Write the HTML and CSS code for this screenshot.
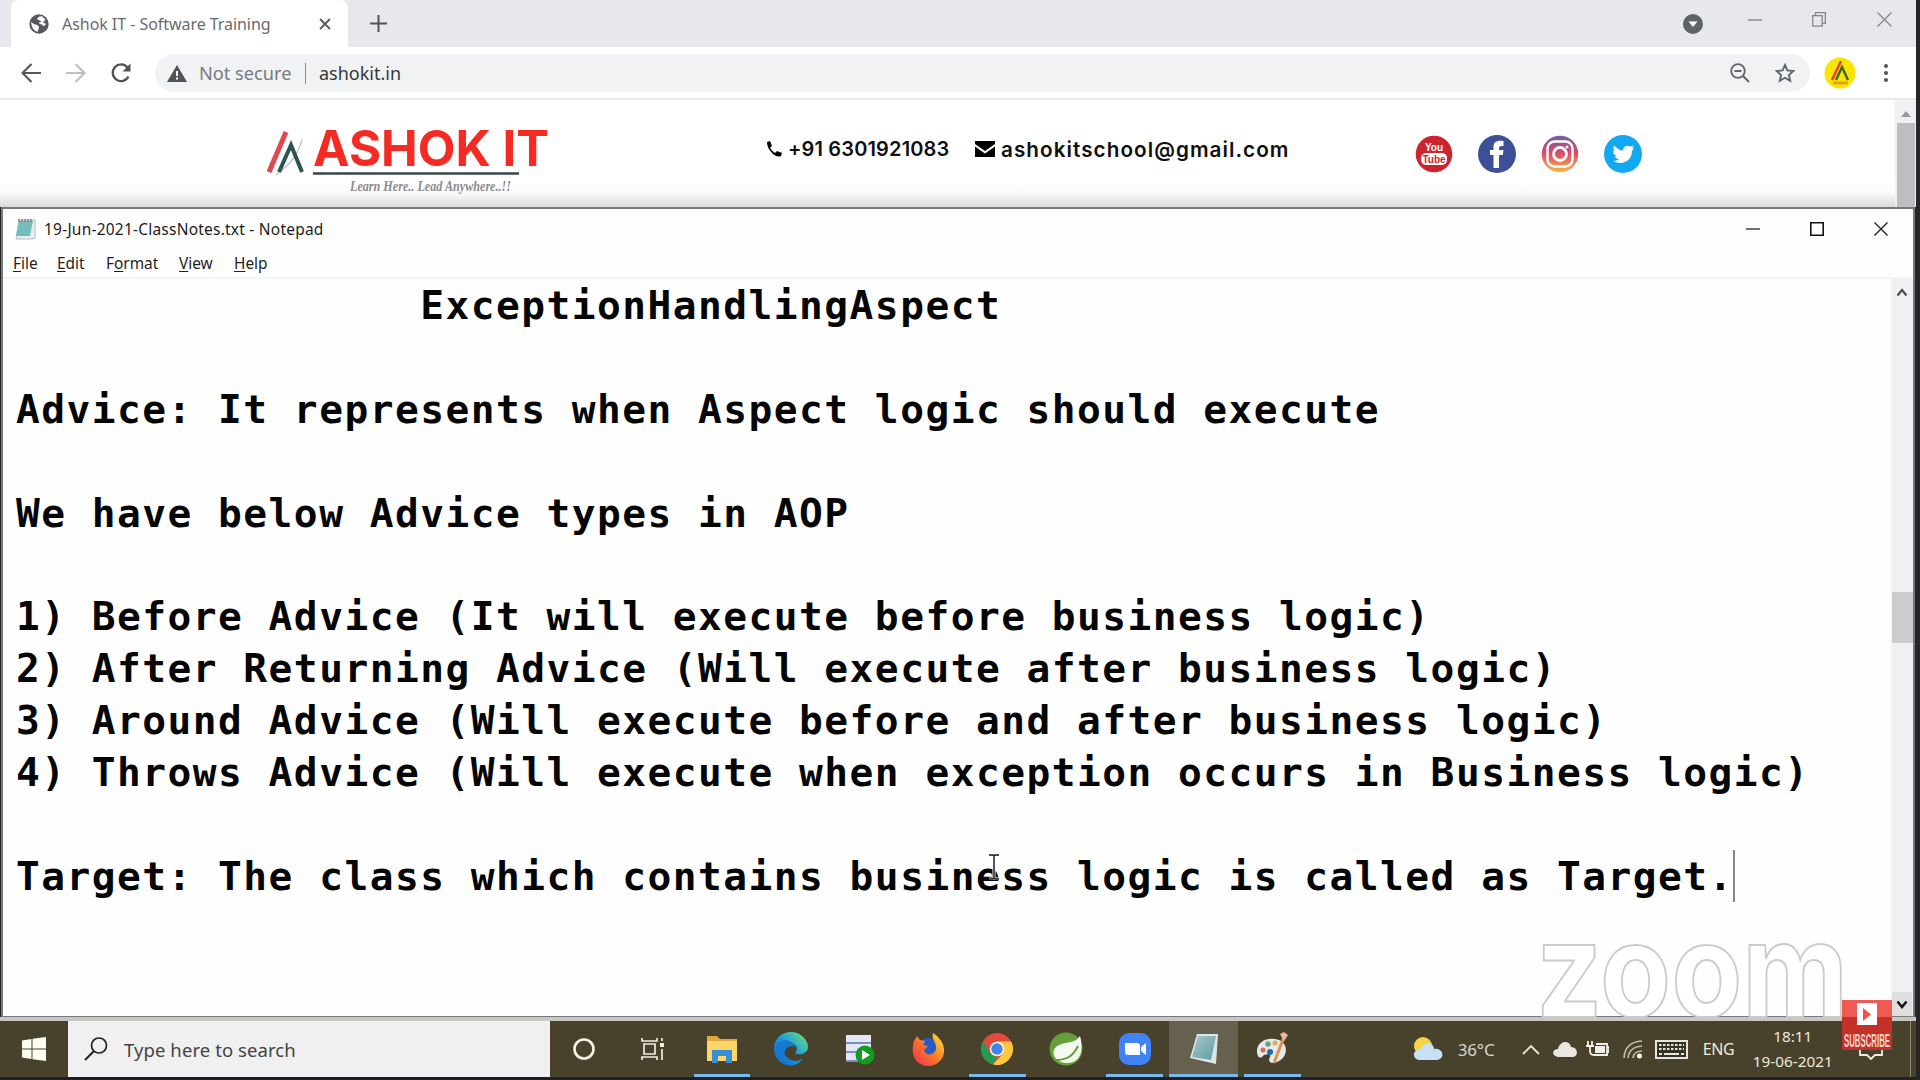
FILE: index.html
```html
<!DOCTYPE html>
<html lang="en">
<head>
<meta charset="utf-8">
<title>19-Jun-2021-ClassNotes.txt - Notepad</title>
<link rel="stylesheet" href="styles.css">
</head>
<body>
<main class="desktop">
  <section class="browser">
    <div class="tabstrip">
      <div class="tab">
        <svg class="globe" width="20" height="20" viewBox="0 0 20 20"><circle cx="10" cy="10" r="9.700" fill="#55585c"/><path d="M2.500 8.500Q5 11 7.500 11q2.500.5 2 3l-1 3.500Q3 16 2.500 8.500zM8 5q2-3 5-2.500l3 3q-1 3-4 2.500-2 0-1.500 1.500 3 0 4 2.500l2.500-2" fill="#fff" stroke="#fff" stroke-width=".6"/></svg>
        <span class="tab-title">Ashok IT - Software Training</span>
        <svg class="tab-x" width="12" height="12" viewBox="0 0 12 12"><path d="M1 1l10 10M11 1L1 11" stroke="#55585c" stroke-width="1.8"/></svg>
      </div>
      <svg class="plus" width="17" height="17" viewBox="0 0 17 17"><path d="M8.500 0v17M0 8.500h17" stroke="#505357" stroke-width="2"/></svg>
      <div class="win-controls">
        <svg width="20" height="20" viewBox="0 0 20 20"><circle cx="10" cy="10" r="10" fill="#5f6368"/><path d="M5.500 7.500h9L10 13z" fill="#fff"/></svg>
        <svg width="14" height="14" viewBox="0 0 14 14"><path d="M0 7h14" stroke="#85868a" stroke-width="1.400"/></svg>
        <svg width="14" height="15" viewBox="0 0 14 15"><path d="M.7 3.700h9.500v10.500H.7zM3.500 3.500V.7h9.800v10.600h-3" fill="none" stroke="#85868a" stroke-width="1.300"/></svg>
        <svg width="15" height="15" viewBox="0 0 15 15"><path d="M.5.5l14 14M14.500.5l-14 14" stroke="#85868a" stroke-width="1.200"/></svg>
      </div>
    </div>
    <div class="toolbar">
      <svg class="nav" width="20" height="20" viewBox="0 0 20 20"><path d="M20 10H2M10.500 1L1.500 10l9 9" fill="none" stroke="#55585c" stroke-width="2.200"/></svg>
      <svg class="nav" width="20" height="20" viewBox="0 0 20 20"><path d="M0 10h18M9.500 1l9 9-9 9" fill="none" stroke="#c0c1c3" stroke-width="2.200"/></svg>
      <svg class="nav" width="20" height="20" viewBox="0 0 20 20"><path d="M17.500 13.500A8.300 8.300 0 1 1 16.500 4.500" fill="none" stroke="#505357" stroke-width="2.300"/><path d="M19.500.5v8h-8z" fill="#505357"/></svg>
      <div class="omnibox">
        <svg width="20" height="17" viewBox="0 0 20 17"><path d="M10 0l10 17H0z" fill="#505357"/><path d="M10 6v5M10 12.500v2" stroke="#fff" stroke-width="2"/></svg>
        <span class="insecure">Not secure</span>
        <span class="divider"></span>
        <span class="host">ashokit.in</span>
        <svg class="mag" width="20" height="20" viewBox="0 0 20 20"><circle cx="8" cy="8" r="6.800" fill="none" stroke="#606367" stroke-width="1.800"/><path d="M4.500 8h7M13 13l6 6" stroke="#606367" stroke-width="2"/></svg>
        <svg class="star" width="20" height="20" viewBox="0 0 20 20"><path d="M10 2l2.400 5.400 5.900.6-4.400 4 1.300 5.800L10 14.800l-5.200 3 1.300-5.800-4.400-4 5.900-.6z" fill="none" stroke="#606367" stroke-width="1.900"/></svg>
      </div>
      <svg class="avatar" width="32" height="32" viewBox="0 0 32 32"><circle cx="16" cy="16" r="15.500" fill="#f8e500"/><path d="M8 23L17 4" stroke="#e1452d" stroke-width="2.600"/><path d="M12 23l6-13 6 13" fill="none" stroke="#41632c" stroke-width="2.400"/><path d="M9 26h15" stroke="#ed9b22" stroke-width="3"/></svg>
      <svg class="dots" width="4" height="18" viewBox="0 0 4 18"><circle cx="2" cy="2" r="2"/><circle cx="2" cy="9" r="2"/><circle cx="2" cy="16" r="2"/></svg>
    </div>
    <div class="site">
      <svg class="logo" width="300" height="85" viewBox="0 -13 300 85">
        <path d="M2 45L19 5" stroke="#df4850" stroke-width="5"/>
        <path d="M9 48Q31 32 35 12" fill="none" stroke="#c5c9c8" stroke-width="1.500"/>
        <path d="M12 45l12-27 11 27" fill="none" stroke="#2c554f" stroke-width="4"/>
        <text class="logo-name" x="46" y="39" textLength="236" lengthAdjust="spacingAndGlyphs">ASHOK IT</text>
        <path d="M46 46.500h206" stroke="#35474a" stroke-width="2.400"/>
        <text class="logo-tag" x="83" y="64" textLength="161" lengthAdjust="spacingAndGlyphs">Learn Here.. Lead Anywhere..!!</text>
      </svg>
      <div class="contact">
        <svg width="16" height="16" viewBox="0 0 16 16"><path d="M1 1l3-1 2 5-2 2q2 3 5 5l2-2 5 2-1 3q-4 2-9-3T1 1z"/></svg>
        <span class="phone">+91 6301921083</span>
        <svg width="20" height="16" viewBox="0 0 20 16"><path d="M0 0h20v3l-10 7L0 3zM0 5.500l10 7 10-7V16H0z"/></svg>
        <span class="mail">ashokitschool@gmail.com</span>
      </div>
      <div class="social">
        <svg width="38" height="38" viewBox="0 0 38 38"><circle cx="19" cy="19" r="18.300" fill="#cc2530"/><rect x="6" y="18" width="26" height="12" rx="5" fill="#fff"/><text x="19" y="16" class="yt yt-you">You</text><text x="19" y="28" class="yt yt-tube">Tube</text></svg>
        <svg width="38" height="38" viewBox="0 0 38 38"><circle cx="19" cy="19" r="19" fill="#3b5096"/><path d="M15.500 33V20H12v-5h3.500v-3c0-5 3-7 10-6v5c-4 0-4.500 0-4.500 4h4.500l-.7 5H21v13z" fill="#fff"/></svg>
        <svg width="38" height="38" viewBox="0 0 38 38"><defs><linearGradient id="ig" x1="0" y1="0" x2="0" y2="1"><stop offset="0" stop-color="#69659e"/><stop offset=".45" stop-color="#d9486f"/><stop offset="1" stop-color="#fbb545"/></linearGradient></defs><circle cx="19" cy="19" r="18.300" fill="url(#ig)"/><rect x="6.500" y="6.500" width="25" height="25" rx="7" fill="none" stroke="#fff" stroke-width="2.400"/><circle cx="19" cy="19" r="6.500" fill="none" stroke="#fff" stroke-width="2.800"/><circle cx="26" cy="12" r="1.500" fill="#fff"/></svg>
        <svg width="38" height="38" viewBox="0 0 38 38"><circle cx="19" cy="19" r="19" fill="#13a8f2"/><path d="M9 26c3 0 5-1 6-2-3 0-4-2-4-3h2c-3-1-4-3-4-5l2 .5c-2-2-2-4-1-6 3 3 6 5 9 5 0-4 4-6 7-4l4-1-2 3 2-.5-2 3c0 10-10 15-19 10z" fill="#fff"/></svg>
      </div>
      <div class="page-scroll"><svg width="10" height="6" viewBox="0 0 10 6"><path d="M5 0l5 6H0z" fill="#999"/></svg><span class="page-thumb"></span></div>
    </div>
  </section>

  <section class="notepad">
    <header class="titlebar">
      <svg width="22" height="22" viewBox="0 0 22 22"><path d="M4 2h16v18l-3 1H1z" fill="#e8edef" stroke="#a3b0b5" stroke-width=".8"/><path d="M4 3h14l-3 15H1z" fill="#73bdbd"/><path d="M4 1v3M7 1v3M10 1v3M13 1v3M16 1v3" stroke="#647477" stroke-width="1.200"/></svg>
      <h1>19-Jun-2021-ClassNotes.txt - Notepad</h1>
      <div class="np-controls">
        <svg width="14" height="14" viewBox="0 0 14 14"><path d="M0 7h14" stroke="#333" stroke-width="1.400"/></svg>
        <svg width="14" height="14" viewBox="0 0 14 14"><path d="M.8.8h12.400v12.400H.8z" fill="none" stroke="#111" stroke-width="1.600"/></svg>
        <svg width="14" height="14" viewBox="0 0 14 14"><path d="M.5.5l13 13M13.500.5l-13 13" stroke="#222" stroke-width="1.400"/></svg>
      </div>
    </header>
    <nav class="menu"><span class="m-file"><u>F</u>ile</span><span class="m-edit"><u>E</u>dit</span><span class="m-format">F<u>o</u>rmat</span><span class="m-view"><u>V</u>iew</span><span class="m-help"><u>H</u>elp</span></nav>
    <div class="editor">
<pre class="notes">                ExceptionHandlingAspect

Advice: It represents when Aspect logic should execute

We have below Advice types in AOP

1) Before Advice (It will execute before business logic)
2) After Returning Advice (Will execute after business logic)
3) Around Advice (Will execute before and after business logic)
4) Throws Advice (Will execute when exception occurs in Business logic)

Target: The class which contains business logic is called as Target.<span class="caret"></span></pre>
      <div class="scrollbar">
        <svg width="12" height="9" viewBox="0 0 12 9"><path d="M1.500 7.500L6 2l4.500 5.500" fill="none" stroke="#505050" stroke-width="2.200"/></svg>
        <span class="thumb"></span>
        <span class="down"><svg width="12" height="9" viewBox="0 0 12 9"><path d="M1.500 1.500L6 7l4.500-5.500" fill="none" stroke="#111" stroke-width="2.500"/></svg></span>
      </div>
    </div>
  </section>

  <footer class="taskbar">
    <div class="start"><svg width="24" height="24" viewBox="0 0 24 24" fill="#fffff0"><path d="M0 3.500L9.500 2v9.500H0zM10.500 1.800L24 0v11.500H10.500zM0 12.500h9.500V22L0 20.500zM10.500 12.500H24V24l-13.500-1.800z"/></svg></div>
    <div class="search"><svg width="24" height="24" viewBox="0 0 24 24"><circle cx="15" cy="8.500" r="7.500" fill="none" stroke="#222" stroke-width="1.700"/><path d="M10 14l-9 9" stroke="#222" stroke-width="1.900"/></svg><span>Type here to search</span></div>
    <div class="apps">
      <div class="app"><svg width="24" height="24" viewBox="0 0 24 24"><circle cx="12" cy="12" r="9.500" fill="none" stroke="#f4f3e8" stroke-width="2.600"/></svg></div>
      <div class="app"><svg width="24" height="24" viewBox="0 0 24 24"><path d="M1 1v3h15V1M1 23v-3h15v3M3 7h11v10H3zM21 1v3M21 12v11" fill="none" stroke="#eeede1" stroke-width="1.700"/><path d="M19 6h4v4h-4z" fill="#eeede1"/></svg></div>
      <div class="app open"><svg width="32" height="28" viewBox="0 0 32 28"><path d="M1 1h10l3 3h17v22H1z" fill="#e2a93a"/><path d="M1 6h30v20H1z" fill="#ffd567"/><path d="M6 15h20v13h-6v-7h-8v7H6z" fill="#388fd4"/></svg></div>
      <div class="app"><svg width="36" height="36" viewBox="0 0 36 36"><defs><linearGradient id="edge" x1="0" y1="1" x2="1" y2="0"><stop stop-color="#0867c8"/><stop offset=".5" stop-color="#199ae0"/><stop offset=".8" stop-color="#51c99b"/><stop offset="1" stop-color="#70d95e"/></linearGradient></defs><path d="M1 18C1 8 8 1 18 1s17 8 17 15-10 9-13 6c4-4 1-10-5-10C9 12 8 25 18 29c5 2 9 1 12-2C22 41 1 34 1 18z" fill="url(#edge)"/><path d="M2 16c4-9 17-9 20 0-9-4-16 8-4 15C8 33 0 25 2 16z" fill="#1479cf"/></svg></div>
      <div class="app"><svg width="30" height="32" viewBox="0 0 30 32"><path d="M1 2h25v27H1z" fill="#e3e7f7"/><path d="M1 10h25M1 19h25M1 28h25" stroke="#7f8dbb" stroke-width="2"/><circle cx="20" cy="22" r="9.500" fill="#119c20"/><path d="M17 17l8 5-8 5z" fill="#fff"/></svg></div>
      <div class="app"><svg width="34" height="34" viewBox="0 0 34 34"><defs><linearGradient id="fox" x1="0" y1="1" x2="1" y2="0"><stop stop-color="#ef2858"/><stop offset=".5" stop-color="#ff7925"/><stop offset="1" stop-color="#ffec44"/></linearGradient></defs><circle cx="17" cy="17" r="11" fill="#255ccb"/><path d="M3 9l3-5 3 4 5 1-2 4 5 1-4 4c2 7 11 5 12-1 1-7-5-9-3-16 3 2 10 7 11 16 1 10-7 17-16 17S-2 26 3 9z" fill="url(#fox)"/></svg></div>
      <div class="app open"><svg width="32" height="32" viewBox="0 0 32 32"><circle cx="16" cy="16" r="16" fill="#e34b3c"/><path d="M2.200 8L9 20l7 4-4 7.500A16 16 0 0 1 2.200 8z" fill="#249c50"/><path d="M16 8.500h14A16 16 0 0 1 12 31.500L22.500 20z" fill="#fcc83d"/><circle cx="16" cy="16" r="7.300" fill="#f1f4e9"/><circle cx="16" cy="16" r="5.700" fill="#4284ed"/></svg></div>
      <div class="app"><svg width="34" height="34" viewBox="0 0 34 34"><circle cx="17" cy="17" r="16.500" fill="#659f3a"/><path d="M31 4c4 14 1 27-13 27-14 0-18-14-8-18 10-4 15-1 21-9z" fill="#f5f8ee"/><path d="M7 28c11 0 17-4 22-14" fill="none" stroke="#659f3a" stroke-width="2"/></svg></div>
      <div class="app open"><svg width="32" height="32" viewBox="0 0 32 32"><rect width="32" height="32" rx="10" fill="#3f83f5"/><path d="M6 10h12q3 0 3 3v9H9q-3 0-3-3zM22 14l5-4v12l-5-4z" fill="#fff"/></svg></div>
      <div class="app open active"><svg width="32" height="32" viewBox="0 0 32 32"><defs><linearGradient id="pad" x2="1" y2="1"><stop stop-color="#a9c7ca"/><stop offset="1" stop-color="#5d9ea4"/></linearGradient></defs><path d="M9 1h21l-2 30L2 25z" fill="#dce6e5"/><path d="M10 3h18l-5 24-19-3z" fill="url(#pad)"/></svg></div>
      <div class="app open"><svg width="34" height="34" viewBox="0 0 34 34"><path d="M2 20C1 9 14 4 24 8s9 18-2 22c-8 3-9-2-7-5s-5-4-8 0c-3 2-5-2-5-5z" fill="#e4e9ec"/><circle cx="8" cy="18" r="2.500" fill="#da6657"/><circle cx="13" cy="12" r="2.700" fill="#62a779"/><circle cx="20" cy="11" r="2.500" fill="#e2a956"/><circle cx="15" cy="20" r="3" fill="#256a95"/><path d="M19 31L29 5" stroke="#d8954f" stroke-width="3"/><path d="M25 2l4-2 4 3-4 6z" fill="#edb5a0"/></svg></div>
    </div>
    <div class="tray">
      <svg width="30" height="24" viewBox="0 0 30 24"><circle cx="10" cy="9" r="9" fill="#f4d348"/><path d="M6 23c-8-1-6-12 2-10 2-9 12-9 13-1 9-2 12 10 3 11z" fill="#c7dff7"/></svg>
      <span class="temp">36°C</span>
      <svg width="18" height="11" viewBox="0 0 18 11"><path d="M1 10l8-8 8 8" fill="none" stroke="#e9e8da" stroke-width="1.800"/></svg>
      <svg class="cloud" width="24" height="15" viewBox="0 0 24 15"><path d="M5 15c-7-1-6-8 0-8C7-2 17-2 18 5c7 0 8 9 2 10z" fill="#e9e7df"/></svg>
      <svg class="battery" width="23" height="18" viewBox="0 0 23 18"><path d="M2 1v5M6 1v5M0 6h8M4 6v5q0 4 4 4h13V4H10M21 7h2v5h-2" fill="none" stroke="#f1f0e6" stroke-width="1.800"/><path d="M9 6h10v7H9z" fill="#f1f0e6"/></svg>
      <svg class="wifi" width="20" height="19" viewBox="0 0 20 19"><path d="M1 18Q2 2 19 1M5 18Q6 7 19 6M10 18q1-7 9-7" fill="none" stroke="#bdbbaa" stroke-width="1.700"/><circle cx="16.500" cy="16" r="2.500" fill="#fffff0"/></svg>
      <svg class="keyboard" width="33" height="19" viewBox="0 0 33 19"><path d="M1 1h31v17H1z" fill="#343225" stroke="#e7e6dc" stroke-width="2"/><path d="M4 5h25M4 9h25" stroke="#e7e6dc" stroke-width="2" stroke-dasharray="2.500 1.500"/><path d="M4 14h3M9 14h15M26 14h3" stroke="#e7e6dc" stroke-width="2"/></svg>
      <span class="lang">ENG</span>
      <div class="clock"><span>18:11</span><span>19-06-2021</span></div>
      <svg class="notice" width="24" height="24" viewBox="0 0 24 24"><path d="M1 3h22v15h-7l-4 4-4-4H1z" fill="none" stroke="#eeede3" stroke-width="1.800"/></svg>
      <span class="peek"></span>
    </div>
  </footer>

  <svg class="watermark" width="320" height="120" viewBox="0 -34 320 120"><text x="0" y="78" textLength="312" lengthAdjust="spacingAndGlyphs">zoom</text></svg>
  <div class="subscribe"><svg width="20" height="22" viewBox="0 0 20 22"><path d="M0 0h20v22H0z" fill="#fff"/><path d="M6 5l8 6.500L6 18z" fill="#ef5047"/></svg><svg class="sub-label" width="46" height="22" viewBox="0 0 46 22"><text x="0" y="17" textLength="46" lengthAdjust="spacingAndGlyphs">SUBSCRIBE</text></svg></div>
  <svg class="ibeam" width="12" height="26" viewBox="0 0 12 26"><path d="M1 1h4l1 1 1-1h4M6 2v22M1 25h4l1-1 1 1h4" fill="none" stroke="#fff" stroke-width="3"/><path d="M1 1h4l1 1 1-1h4M6 2v22M1 25h4l1-1 1 1h4" fill="none" stroke="#111" stroke-width="1.400"/></svg>
</main>
</body>
</html>
```
FILE: styles.css
```css
* { box-sizing: border-box; }
body { margin: 0; background: #25262a; font-family: "Noto Sans", "Open Sans", sans-serif; overflow: hidden; }
svg { display: block; flex: none; }
.desktop { position: relative; width: 1920px; height: 1080px; display: flex; flex-direction: column; overflow: hidden; background: #25262a; }
.browser { width: 1916px; height: 207px; flex: none; background: #fff; }
.tabstrip { height: 47px; background: #e8e8ec; display: flex; padding-left: 11px; }
.tab { width: 337px; height: 47px; background: #fff; border-radius: 8px 8px 0 0; display: flex; align-items: center; padding-left: 18px; }
.tab-title { margin-left: 13px; width: 258px; font-size: 16px; letter-spacing: -.05px; color: #686b6f; white-space: nowrap; }
.tab-x { margin-left: -1px; }
.plus { margin: 15px 0 0 22px; }
.win-controls { margin-left: auto; display: flex; padding: 14px 24px 0 0; }
.win-controls svg:nth-child(1) { margin-right: 45px; }
.win-controls svg:nth-child(2) { margin: -1px 50px 0 0; }
.win-controls svg:nth-child(3) { margin: -2px 51px 0 0; }
.win-controls svg:nth-child(4) { margin-top: -2px; }
.toolbar { height: 53px; border-bottom: 2px solid #e9eaec; display: flex; align-items: center; padding: 1px 0 0 21px; }
.nav { margin-right: 25px; }
.omnibox { width: 1655px; height: 38px; border-radius: 19px; background: #f1f2f4; display: flex; align-items: center; padding-left: 12px; margin-left: -1px; }
.insecure { margin-left: 12px; width: 106px; font-size: 18.2px; color: #777a7e; white-space: nowrap; }
.divider { width: 1px; height: 21px; background: #888b8f; }
.host { margin-left: 13px; font-size: 18px; color: #35373a; }
.mag { margin-left: auto; }
.star { margin: 0 15px 0 25px; }
.avatar { margin-left: 14px; }
.dots { margin-left: 28px; fill: #505357; }
.site { height: 107px; display: flex; position: relative; background: linear-gradient(#fff 82px, #fafafa 93px, #dadada); }
.logo { margin: 14px 0 0 267px; }
.logo-name { font: 700 49px Inter, sans-serif; fill: #f52b23; }
.logo-tag { font: italic 700 15px "Liberation Serif", serif; fill: #8b8b90; }
.contact { width: 530px; height: 28px; margin: 35px 0 0 199px; display: flex; align-items: center; color: #101010; font: 600 20px Inter, "Noto Sans", sans-serif; white-space: nowrap; }
.phone { width: 163px; margin-left: 6px; letter-spacing: .15px; }
.contact svg:nth-of-type(2) { margin-left: 24px; }
.mail { margin-left: 6px; font-size: 20.7px; letter-spacing: 1.05px; }
.social { display: flex; gap: 25px; margin: 35px 0 0 119px; }
.yt { text-anchor: middle; font: 700 10px "Liberation Sans Narrow", "Liberation Sans", sans-serif; }
.yt-you { fill: #fff; }
.yt-tube { fill: #cc2530; }
.page-scroll { width: 21px; height: 107px; margin-left: auto; background: #f0f0f0; display: flex; flex-direction: column; align-items: center; padding-top: 11px; }
.page-thumb { width: 18px; height: 84px; margin-top: 6px; background: #bebebe; }
.notepad { width: 1914px; height: 810px; margin-left: 1px; flex: none; background: #fefefe; border: 2px solid #77797c; border-bottom-width: 1px; display: flex; flex-direction: column; }
.titlebar { height: 39px; display: flex; align-items: center; padding: 0 25px 0 12px; }
h1 { margin: 0 0 0 7px; font-size: 15.5px; letter-spacing: .22px; line-height: 22px; font-weight: 400; color: #1c1c20; white-space: nowrap; }
.np-controls { display: flex; margin-left: auto; gap: 50px; }
.menu { height: 31px; border-bottom: 2px solid #f4f4f4; display: flex; align-items: center; padding: 2px 0 0 10px; font-size: 15.4px; color: #222; }
.menu span { white-space: nowrap; }
.menu u { text-underline-offset: 2px; }
.m-file { width: 44px; }
.m-edit { width: 49px; }
.m-format { width: 73px; }
.m-view { width: 55px; }
.editor { flex: 1; display: flex; min-height: 0; }
.notes { margin: 0; padding: 1px 0 0 13px; flex: 1; font: 700 39.5px/51.88px "DejaVu Sans Mono", monospace; letter-spacing: 1.48px; color: #050505; overflow: hidden; }
.caret { display: inline-block; width: 2px; height: 52px; margin: -14px 0 0 -1px; background: #888; vertical-align: -12px; }
.scrollbar { width: 22px; background: #f1f1f1; display: flex; flex-direction: column; align-items: center; padding-top: 9px; }
.thumb { width: 21px; height: 51px; margin-top: 295px; background: #cdcdcd; }
.down { width: 20px; height: 24px; margin-top: auto; background: #dedede; display: flex; align-items: center; justify-content: center; }
.taskbar { width: 1916px; height: 63px; flex: none; border-top: 4px solid #c8c8c2; border-bottom: 3px solid #202026; background: #48412c; display: flex; }
.start { width: 68px; display: flex; align-items: center; justify-content: center; }
.search { width: 482px; background: #f0f0f0; display: flex; align-items: center; padding-left: 16px; color: #444; font-size: 18.500px; }
.search span { margin-left: 16px; letter-spacing: .08px; }
.apps { display: flex; }
.app { width: 68.8px; display: flex; align-items: center; justify-content: center; position: relative; }
.active { background: #66614f; }
.open::after { content: ""; position: absolute; bottom: 0; left: 6px; right: 6px; height: 3px; background: #76b9ed; }
.active::after { left: 0; right: 0; }
.tray { margin-left: 106px; display: flex; align-items: center; color: #ecebdc; font-size: 16px; }
.temp { width: 44px; margin: 1px 20px 0 15px; font-size: 17px; letter-spacing: -.2px; color: #d6d5c8; }
.cloud { margin-left: 13px; }
.battery { margin-left: 9px; }
.wifi { margin-left: 14px; }
.keyboard { margin-left: 12px; }
.lang { margin-left: 15px; width: 34px; letter-spacing: -.4px; }
.clock { width: 84px; margin-left: 14px; display: flex; flex-direction: column; align-items: center; line-height: 25.500px; font-size: 15.3px; white-space: nowrap; }
.notice { margin-left: 24px; }
.peek { width: 1px; height: 56px; margin-left: 27px; background: #8b8775; }
.watermark { position: absolute; left: 1536px; top: 905px; }
.watermark text { font: 700 131px Inter, sans-serif; fill: #fff; fill-opacity: .6; stroke: #cbcbcb; stroke-width: 2px; }
.subscribe { position: absolute; left: 1842px; top: 1000px; width: 50px; height: 50px; padding-top: 3px; background: linear-gradient(#ef5b54 0 17px, #c33128 17px); display: flex; flex-direction: column; align-items: center; gap: 5px; }
.sub-label text { font: 700 19px "Liberation Sans", sans-serif; fill: #f3d8d2; }
.ibeam { position: absolute; left: 988px; top: 854px; }
```
